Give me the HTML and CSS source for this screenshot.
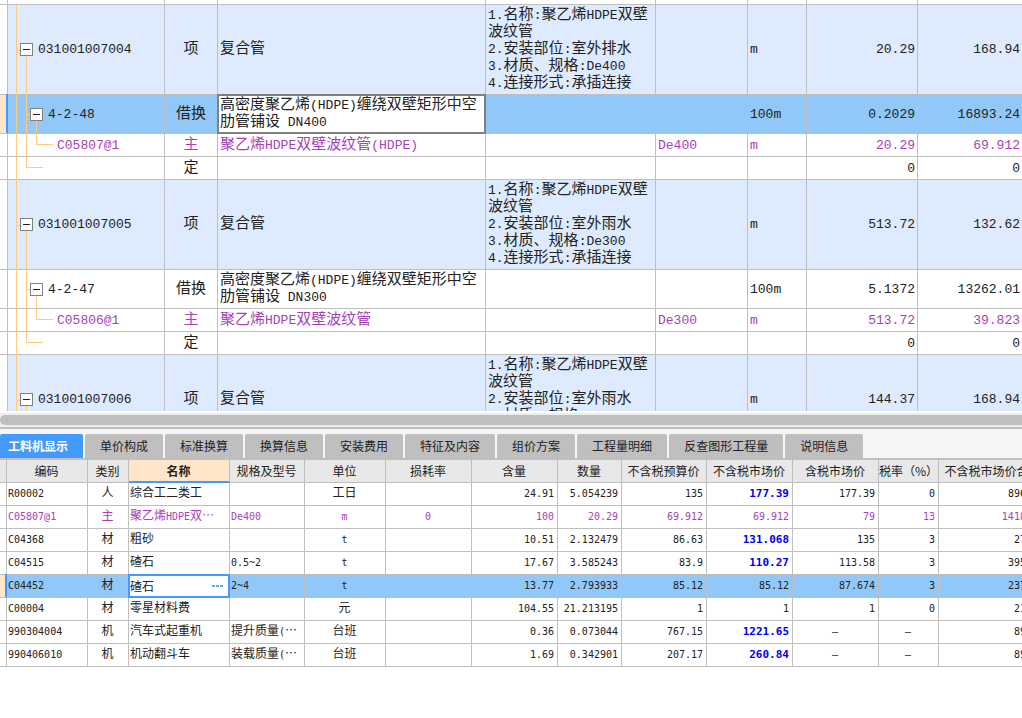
FILE: index.html
```html
<!DOCTYPE html>
<html lang="zh-CN">
<head>
<meta charset="utf-8">
<title>工料机显示</title>
<link rel="stylesheet" href="styles.css">
</head>
<body>
<main class="app">
  <section class="bill-pane">
    <table class="grid bill">
      <colgroup><col class="b-mark"><col class="b-code"><col class="b-kind"><col class="b-name"><col class="b-feature"><col class="b-spec"><col class="b-unit"><col class="b-qty"><col></colgroup>
      <tbody>
        <tr class="stub"><td></td><td></td><td></td><td></td><td></td><td></td><td></td><td></td><td></td></tr>
        <tr class="item"><td class="mark"></td><td class="code lv1"><button class="toggle" type="button" aria-label="折叠"></button>031001007004</td><td class="mid"><span class="z">项</span></td><td><span class="z">复合管</span></td><td>1.<span class="z">名称</span>:<span class="z">聚乙烯</span>HDPE<span class="z">双壁</span><br><span class="z">波纹管</span><br>2.<span class="z">安装部位</span>:<span class="z">室外排水</span><br>3.<span class="z">材质、规格</span>:De400<br>4.<span class="z">连接形式</span>:<span class="z">承插连接</span></td><td></td><td>m</td><td class="num">20.29</td><td class="num">168.94</td></tr>
        <tr class="norm selected"><td class="mark"></td><td class="code lv2"><button class="toggle" type="button" aria-label="折叠"></button>4-2-48</td><td class="mid"><span class="z">借换</span></td><td class="focus"><span class="z">高密度聚乙烯</span>(HDPE)<span class="z">缠绕双壁矩形中空</span><br><span class="z">肋管铺设</span> DN400</td><td></td><td></td><td>100m</td><td class="num">0.2029</td><td class="num">16893.24</td></tr>
        <tr class="material"><td class="mark"></td><td class="code leaf">C05807@1</td><td class="mid"><span class="z">主</span></td><td><span class="z">聚乙烯</span>HDPE<span class="z">双壁波纹管</span>(HDPE)</td><td></td><td>De400</td><td>m</td><td class="num">20.29</td><td class="num">69.912</td></tr>
        <tr><td class="mark"></td><td class="code end"></td><td class="mid"><span class="z">定</span></td><td></td><td></td><td></td><td></td><td class="num">0</td><td class="num">0</td></tr>
        <tr class="item"><td class="mark"></td><td class="code lv1"><button class="toggle" type="button" aria-label="折叠"></button>031001007005</td><td class="mid"><span class="z">项</span></td><td><span class="z">复合管</span></td><td>1.<span class="z">名称</span>:<span class="z">聚乙烯</span>HDPE<span class="z">双壁</span><br><span class="z">波纹管</span><br>2.<span class="z">安装部位</span>:<span class="z">室外雨水</span><br>3.<span class="z">材质、规格</span>:De300<br>4.<span class="z">连接形式</span>:<span class="z">承插连接</span></td><td></td><td>m</td><td class="num">513.72</td><td class="num">132.62</td></tr>
        <tr class="norm"><td class="mark"></td><td class="code lv2"><button class="toggle" type="button" aria-label="折叠"></button>4-2-47</td><td class="mid"><span class="z">借换</span></td><td><span class="z">高密度聚乙烯</span>(HDPE)<span class="z">缠绕双壁矩形中空</span><br><span class="z">肋管铺设</span> DN300</td><td></td><td></td><td>100m</td><td class="num">5.1372</td><td class="num">13262.01</td></tr>
        <tr class="material"><td class="mark"></td><td class="code leaf">C05806@1</td><td class="mid"><span class="z">主</span></td><td><span class="z">聚乙烯</span>HDPE<span class="z">双壁波纹管</span></td><td></td><td>De300</td><td>m</td><td class="num">513.72</td><td class="num">39.823</td></tr>
        <tr><td class="mark"></td><td class="code end"></td><td class="mid"><span class="z">定</span></td><td></td><td></td><td></td><td></td><td class="num">0</td><td class="num">0</td></tr>
        <tr class="item"><td class="mark"></td><td class="code lv1"><button class="toggle" type="button" aria-label="折叠"></button>031001007006</td><td class="mid"><span class="z">项</span></td><td><span class="z">复合管</span></td><td>1.<span class="z">名称</span>:<span class="z">聚乙烯</span>HDPE<span class="z">双壁</span><br><span class="z">波纹管</span><br>2.<span class="z">安装部位</span>:<span class="z">室外雨水</span><br>3.<span class="z">材质、规格</span>:De400<br>4.<span class="z">连接形式</span>:<span class="z">承插连接</span></td><td></td><td>m</td><td class="num">144.37</td><td class="num">168.94</td></tr>
      </tbody>
    </table>
  </section>

  <section class="detail-pane">
    <div class="scroll-track"><div class="scroll-thumb"></div></div>
    <div class="splitter"></div>
    <nav class="tabs">
      <button class="tab active" type="button">工料机显示</button>
      <button class="tab" type="button">单价构成</button>
      <button class="tab" type="button">标准换算</button>
      <button class="tab" type="button">换算信息</button>
      <button class="tab" type="button">安装费用</button>
      <button class="tab" type="button">特征及内容</button>
      <button class="tab" type="button">组价方案</button>
      <button class="tab" type="button">工程量明细</button>
      <button class="tab" type="button">反查图形工程量</button>
      <button class="tab" type="button">说明信息</button>
    </nav>
    <table class="grid res">
      <colgroup><col class="r-mark"><col class="r-code"><col class="r-kind"><col class="r-name"><col class="r-spec"><col class="r-unit"><col class="r-loss"><col class="r-content"><col class="r-qty"><col class="r-budget"><col class="r-market"><col class="r-taxed"><col class="r-rate"><col></colgroup>
      <thead>
        <tr><th></th><th>编码</th><th>类别</th><th class="current">名称</th><th>规格及型号</th><th>单位</th><th>损耗率</th><th>含量</th><th>数量</th><th>不含税预算价</th><th>不含税市场价</th><th>含税市场价</th><th>税率（%）</th><th>不含税市场价合价</th></tr>
      </thead>
      <tbody>
        <tr><td class="mark"></td><td>R00002</td><td class="mid"><span class="z">人</span></td><td><span class="z">综合工二类工</span></td><td></td><td class="mid"><span class="z">工日</span></td><td></td><td class="num">24.91</td><td class="num">5.054239</td><td class="num">135</td><td class="num price">177.39</td><td class="num">177.39</td><td class="num">0</td><td class="num">896.57</td></tr>
        <tr class="material"><td class="mark"></td><td>C05807@1</td><td class="mid"><span class="z">主</span></td><td><span class="z">聚乙烯</span>HDPE<span class="z">双…</span></td><td>De400</td><td class="mid">m</td><td class="mid">0</td><td class="num">100</td><td class="num">20.29</td><td class="num">69.912</td><td class="num">69.912</td><td class="num">79</td><td class="num">13</td><td class="num">1418.51</td></tr>
        <tr><td class="mark"></td><td>C04368</td><td class="mid"><span class="z">材</span></td><td><span class="z">粗砂</span></td><td></td><td class="mid">t</td><td></td><td class="num">10.51</td><td class="num">2.132479</td><td class="num">86.63</td><td class="num price">131.068</td><td class="num">135</td><td class="num">3</td><td class="num">279.5</td></tr>
        <tr><td class="mark"></td><td>C04515</td><td class="mid"><span class="z">材</span></td><td><span class="z">碴石</span></td><td>0.5~2</td><td class="mid">t</td><td></td><td class="num">17.67</td><td class="num">3.585243</td><td class="num">83.9</td><td class="num price">110.27</td><td class="num">113.58</td><td class="num">3</td><td class="num">395.34</td></tr>
        <tr class="selected"><td class="mark"></td><td>C04452</td><td class="mid"><span class="z">材</span></td><td class="focus"><div class="editor"><input class="editor-text" type="text" value="碴石" aria-label="名称"><button class="more" type="button" aria-label="选择"><svg width="11" height="3" viewBox="0 0 11 3"><path d="M0 0h3v2H0zM4 0h3v2H4zM8 0h3v2H8z"/></svg></button></div></td><td>2~4</td><td class="mid">t</td><td></td><td class="num">13.77</td><td class="num">2.793933</td><td class="num">85.12</td><td class="num">85.12</td><td class="num">87.674</td><td class="num">3</td><td class="num">237.82</td></tr>
        <tr><td class="mark"></td><td>C00004</td><td class="mid"><span class="z">材</span></td><td><span class="z">零星材料费</span></td><td></td><td class="mid"><span class="z">元</span></td><td></td><td class="num">104.55</td><td class="num">21.213195</td><td class="num">1</td><td class="num">1</td><td class="num">1</td><td class="num">0</td><td class="num">21.21</td></tr>
        <tr><td class="mark"></td><td>990304004</td><td class="mid"><span class="z">机</span></td><td><span class="z">汽车式起重机</span></td><td><span class="z">提升质量</span>(<span class="z">…</span></td><td class="mid"><span class="z">台班</span></td><td></td><td class="num">0.36</td><td class="num">0.073044</td><td class="num">767.15</td><td class="num price">1221.65</td><td class="mid">–</td><td class="mid">–</td><td class="num">89.23</td></tr>
        <tr><td class="mark"></td><td>990406010</td><td class="mid"><span class="z">机</span></td><td><span class="z">机动翻斗车</span></td><td><span class="z">装载质量</span>(<span class="z">…</span></td><td class="mid"><span class="z">台班</span></td><td></td><td class="num">1.69</td><td class="num">0.342901</td><td class="num">207.17</td><td class="num price">260.84</td><td class="mid">–</td><td class="mid">–</td><td class="num">89.44</td></tr>
      </tbody>
    </table>
  </section>
</main>
</body>
</html>
```

FILE: styles.css
```css
:root {
  --line: #bfbfbf;
  --ink: #222;
  --purple: #a63fb8;
  --blue: #4499ff;
  --tree: #ffc97f;
}

* { box-sizing: border-box; }

body {
  margin: 0;
  background: #fff;
  color: var(--ink);
  font-family: "Liberation Sans", "Noto Sans CJK SC", sans-serif;
}

.app {
  display: flex;
  flex-direction: column;
  height: 100vh;
  overflow: hidden;
}

.bill-pane {
  flex: 1;
  min-height: 0;
  overflow: hidden;
  border-bottom: 2px solid #fff;
}

.detail-pane {
  flex: none;
  height: 305px;
  overflow: hidden;
}

/* shared grid */
.grid {
  width: 100%;
  border-collapse: separate;
  border-spacing: 0;
  table-layout: fixed;
}

.grid td,
.grid th {
  padding: 0 2px;
  border-right: 1px solid var(--line);
  border-bottom: 1px solid var(--line);
  white-space: nowrap;
  vertical-align: middle;
}

.grid td:last-child,
.grid th:last-child { border-right: 0; }

.grid .z {
  font-family: "Noto Sans CJK SC", sans-serif;
  font-weight: 400;
  line-height: 0;
}

.grid .mid { text-align: center; }
.grid .num { text-align: right; }
.grid .material { color: var(--purple); }
.grid .selected td { background: #91c8f7; }

.grid .selected td.mark {
  background: #ffe6c8;
  position: relative;
}

.grid .selected .mark::after {
  content: "";
  position: absolute;
  inset: -1px -1px 0 auto;
  width: 2px;
  background: var(--blue);
}

.grid .selected td.focus {
  position: relative;
  background: #fff;
}

.grid .focus::after {
  content: "";
  position: absolute;
  inset: -1px;
  border: 2px solid #808080;
  pointer-events: none;
}

/* bill of quantities */
.bill {
  font-family: "Liberation Mono", monospace;
  font-size: 13px;
  line-height: 17px;
}

.bill .z { font-size: 15px; }
.bill tr { height: 23px; }
.bill .stub { height: 5px; }
.bill .stub td { line-height: 0; }
.bill .item { height: 90px; }
.bill .norm { height: 39px; }
.bill .item td:not(.mark) { background: #deeafe; }

.b-mark { width: 8px; }
.b-code { width: 157px; }
.b-kind { width: 53px; }
.b-name { width: 268px; }
.b-feature { width: 170px; }
.b-spec { width: 92px; }
.b-unit { width: 59px; }
.b-qty { width: 111px; }

.bill .code { position: relative; }
.bill .lv1 { padding-left: 12px; }
.bill .lv2 { padding-left: 22px; }
.bill .leaf { padding-left: 49px; }

.code::before {
  content: "";
  position: absolute;
  inset: 0 0 -1px 0;
  background-image:
    linear-gradient(var(--tree), var(--tree)),
    linear-gradient(var(--tree), var(--tree)),
    linear-gradient(var(--tree), var(--tree)),
    linear-gradient(var(--tree), var(--tree));
  background-repeat: no-repeat;
}

.lv1::before {
  background-position: 8px 0, 8px 50%, 18px 100%, 18px 100%;
  background-size: 1px 100%, 4px 1px, 1px 50%, 1px 50%;
}

.lv2::before {
  background-position: 8px 0, 18px 0, 18px 50%, 28px 100%;
  background-size: 1px 100%, 1px 100%, 4px 1px, 1px 50%;
}

.leaf::before {
  background-position: 8px 0, 18px 0, 28px 0, 28px 10px;
  background-size: 1px 100%, 1px 100%, 1px 10px, 17px 1px;
}

.end::before {
  background-position: 8px 0, 18px 0, 18px 10px, 18px 10px;
  background-size: 1px 100%, 1px 10px, 17px 1px, 17px 1px;
}

.toggle {
  position: relative;
  width: 13px;
  height: 13px;
  margin: 0 5px 0 0;
  padding: 0;
  border: 1px solid #808080;
  background: linear-gradient(#222, #222) center / 7px 1px no-repeat #fff;
  vertical-align: middle;
}

/* scrollbar and splitter */
.scroll-track {
  height: 14px;
  padding: 2px 0;
  background: #ededed;
}

.scroll-thumb {
  height: 10px;
  border-radius: 5px 0 0 5px;
  background: #bfbfbf;
}

.splitter {
  height: 2px;
  background: #bfbfbf;
}

/* tabs */
.tabs {
  display: flex;
  gap: 2px;
  padding-top: 5px;
  background: #f5f5f5;
  border-bottom: 2px solid var(--line);
}

.tab {
  height: 24px;
  padding: 0 15px;
  border: 0;
  border-radius: 2px 2px 0 0;
  background: #bfbfbf;
  color: var(--ink);
  font: 12px/24px "Noto Sans CJK SC", sans-serif;
  white-space: nowrap;
}

.tab.active {
  padding-left: 8px;
  background: var(--blue);
  color: #fff;
  font-weight: 700;
}

/* resource table */
.res {
  min-width: 1047px;
  font-family: "DejaVu Sans Mono", monospace;
  font-size: 10px;
  line-height: 16px;
}

.res .z { font-size: 12px; }
.res tr { height: 23px; }
.res td { padding-left: 1px; }

.res th {
  background: #e8e8e8;
  font: 12px/16px "Noto Sans CJK SC", sans-serif;
  padding: 0 1px 0 0;
}

.res th.current {
  background: #ffe6c8;
  border-bottom: 2px solid var(--blue);
  font-weight: 700;
}

.r-mark { width: 7px; }
.r-code { width: 81px; }
.r-kind { width: 41px; }
.r-name { width: 101px; }
.r-spec { width: 75px; }
.r-unit { width: 81px; }
.r-loss { width: 86px; }
.r-content { width: 86px; }
.r-qty { width: 64px; }
.r-budget { width: 85px; }
.r-market { width: 86px; }
.r-taxed { width: 86px; }
.r-rate { width: 60px; }

.res .mark { padding: 0; }
.res .num { padding-right: 3px; }

.res .price {
  color: #0000f0;
  font-size: 11px;
  font-weight: 700;
}

.res .focus::after { border-color: var(--blue); }
.editor { display: flex; align-items: center; }

.editor-text {
  flex: 1;
  min-width: 0;
  height: 16px;
  padding: 0;
  border: 0;
  outline: 0;
  background: none;
  color: var(--ink);
  font: 12px/16px "Noto Sans CJK SC", sans-serif;
}

.more {
  display: flex;
  margin: 0;
  padding: 0 4px 0 0;
  border: 0;
  background: none;
}

.more path { fill: #6ba6dc; }
```
